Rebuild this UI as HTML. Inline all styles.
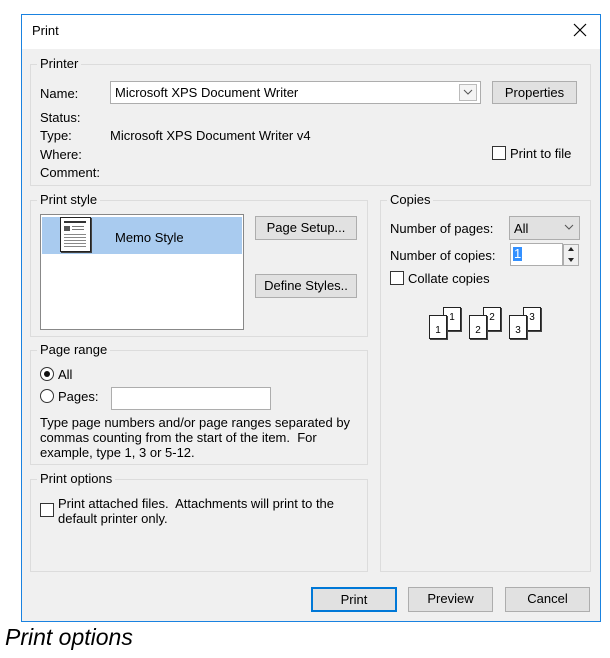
<!DOCTYPE html>
<html><head><meta charset="utf-8"><style>
*{box-sizing:border-box}
body{margin:0;width:610px;height:658px;background:#fff;font-family:"Liberation Sans",sans-serif;font-size:13px;color:#000;position:relative;overflow:hidden}
.a{position:absolute;white-space:nowrap}
.dlg{left:21px;top:14px;width:580px;height:608px;border:1px solid #1a82e0;background:#f0f0f0}
.tb{left:22px;top:15px;width:578px;height:34px;background:#fff}
.grp{border:1px solid #dcdcdc}
.lbl{background:#f0f0f0;padding:0 3px;line-height:14px}
.btn{background:#e1e1e1;border:1px solid #adadad;text-align:center;line-height:22px}
.inp{background:#fff;border:1px solid #7a7a7a}
.cb{width:14px;height:14px;border:1px solid #333;background:#fff}
.rd{width:14px;height:14px;border:1px solid #333;border-radius:50%;background:#fff}
.pg{width:18px;height:24px;border:1px solid #222;background:#fff;box-shadow:1px 1px 0 #444;font-size:10px;text-align:center;line-height:30px}
</style></head><body>
<div class="a dlg"></div>
<div class="a tb"></div>
<div class="a" style="left:32px;top:23px;font-size:13px">Print</div>
<svg class="a" style="left:573px;top:23px" width="14" height="14"><path d="M1 1L13 13M13 1L1 13" stroke="#000" stroke-width="1.2"/></svg>

<div class="a grp" style="left:30px;top:64px;width:561px;height:122px"></div>
<div class="a lbl" style="left:37px;top:57px">Printer</div>
<div class="a" style="left:40px;top:86px">Name:</div>
<div class="a inp" style="left:110px;top:81px;width:371px;height:23px;border-color:#adadad"></div>
<div class="a" style="left:115px;top:85px">Microsoft XPS Document Writer</div>
<div class="a" style="left:459px;top:84px;width:18px;height:17px;border:1px solid #bbb;background:#f4f4f4"></div>
<svg class="a" style="left:463px;top:89px" width="10" height="7"><path d="M1 1L5 5L9 1" stroke="#555" fill="none"/></svg>
<div class="a btn" style="left:492px;top:81px;width:85px;height:23px">Properties</div>
<div class="a" style="left:40px;top:110px">Status:</div>
<div class="a" style="left:40px;top:128px">Type:</div>
<div class="a" style="left:110px;top:128px">Microsoft XPS Document Writer v4</div>
<div class="a" style="left:40px;top:147px">Where:</div>
<div class="a" style="left:40px;top:165px">Comment:</div>
<div class="a cb" style="left:492px;top:146px"></div>
<div class="a" style="left:510px;top:146px">Print to file</div>

<div class="a grp" style="left:30px;top:200px;width:338px;height:137px"></div>
<div class="a lbl" style="left:37px;top:193px">Print style</div>
<div class="a inp" style="left:40px;top:214px;width:204px;height:116px;border-color:#888"></div>
<div class="a" style="left:42px;top:217px;width:200px;height:37px;background:#a9cbef"></div>
<div class="a" style="left:60px;top:217px;width:31px;height:35px;background:#fff;border:1px solid #222;box-shadow:1px 1px 0 #444"></div>
<div class="a" style="left:64px;top:221px;width:22px;height:2px;background:#333"></div>
<div class="a" style="left:64px;top:226px;width:6px;height:5px;background:#555"></div>
<div class="a" style="left:72px;top:226px;width:12px;height:1px;background:#777"></div>
<div class="a" style="left:72px;top:229px;width:12px;height:1px;background:#777"></div>
<div class="a" style="left:64px;top:234px;width:22px;height:14px;background:repeating-linear-gradient(#888 0 1px,#fff 1px 3px)"></div>
<div class="a" style="left:115px;top:230px">Memo Style</div>
<div class="a btn" style="left:255px;top:216px;width:102px;height:24px">Page Setup...</div>
<div class="a btn" style="left:255px;top:274px;width:102px;height:24px">Define Styles..</div>

<div class="a grp" style="left:380px;top:200px;width:211px;height:372px"></div>
<div class="a lbl" style="left:387px;top:193px">Copies</div>
<div class="a" style="left:390px;top:221px">Number of pages:</div>
<div class="a" style="left:509px;top:216px;width:71px;height:24px;background:#e1e1e1;border:1px solid #adadad"></div>
<div class="a" style="left:514px;top:221px">All</div>
<svg class="a" style="left:564px;top:224px" width="10" height="7"><path d="M1 1L5 5L9 1" stroke="#555" fill="none"/></svg>
<div class="a" style="left:390px;top:248px">Number of copies:</div>
<div class="a inp" style="left:510px;top:243px;width:53px;height:23px;border-color:#adadad"></div>
<div class="a" style="left:513px;top:247px;background:#3390ff;color:#fff;line-height:14px;padding:0 1px">1</div>
<div class="a" style="left:563px;top:244px;width:16px;height:22px;border:1px solid #adadad;background:#f0f0f0"></div>
<div class="a" style="left:568px;top:247px;border:3px solid transparent;border-bottom:4px solid #222;border-top:0"></div>
<div class="a" style="left:568px;top:258px;border:3px solid transparent;border-top:4px solid #222;border-bottom:0"></div>
<div class="a cb" style="left:390px;top:271px"></div>
<div class="a" style="left:408px;top:271px">Collate copies</div>
<div class="a pg" style="left:443px;top:307px;line-height:20px">1</div>
<div class="a pg" style="left:429px;top:315px">1</div>
<div class="a pg" style="left:483px;top:307px;line-height:20px">2</div>
<div class="a pg" style="left:469px;top:315px">2</div>
<div class="a pg" style="left:523px;top:307px;line-height:20px">3</div>
<div class="a pg" style="left:509px;top:315px">3</div>

<div class="a grp" style="left:30px;top:350px;width:338px;height:115px"></div>
<div class="a lbl" style="left:37px;top:343px">Page range</div>
<div class="a rd" style="left:40px;top:367px"></div>
<div class="a" style="left:44px;top:371px;width:6px;height:6px;border-radius:50%;background:#111"></div>
<div class="a" style="left:58px;top:367px">All</div>
<div class="a rd" style="left:40px;top:389px"></div>
<div class="a" style="left:58px;top:389px">Pages:</div>
<div class="a inp" style="left:111px;top:387px;width:160px;height:23px;border-color:#adadad"></div>
<div class="a" style="left:40px;top:415px;line-height:15px">Type page numbers and/or page ranges separated by<br>commas counting from the start of the item.&nbsp; For<br>example, type 1, 3 or 5-12.</div>

<div class="a grp" style="left:30px;top:479px;width:338px;height:93px"></div>
<div class="a lbl" style="left:37px;top:472px">Print options</div>
<div class="a cb" style="left:40px;top:503px"></div>
<div class="a" style="left:58px;top:496px;line-height:15px">Print attached files.&nbsp; Attachments will print to the<br>default printer only.</div>

<div class="a btn" style="left:311px;top:587px;width:86px;height:25px;border:2px solid #0078d7;line-height:21px">Print</div>
<div class="a btn" style="left:408px;top:587px;width:85px;height:25px">Preview</div>
<div class="a btn" style="left:505px;top:587px;width:85px;height:25px">Cancel</div>

<div class="a" style="left:5px;top:624px;font-size:23px;font-style:italic">Print options</div>
</body></html>
